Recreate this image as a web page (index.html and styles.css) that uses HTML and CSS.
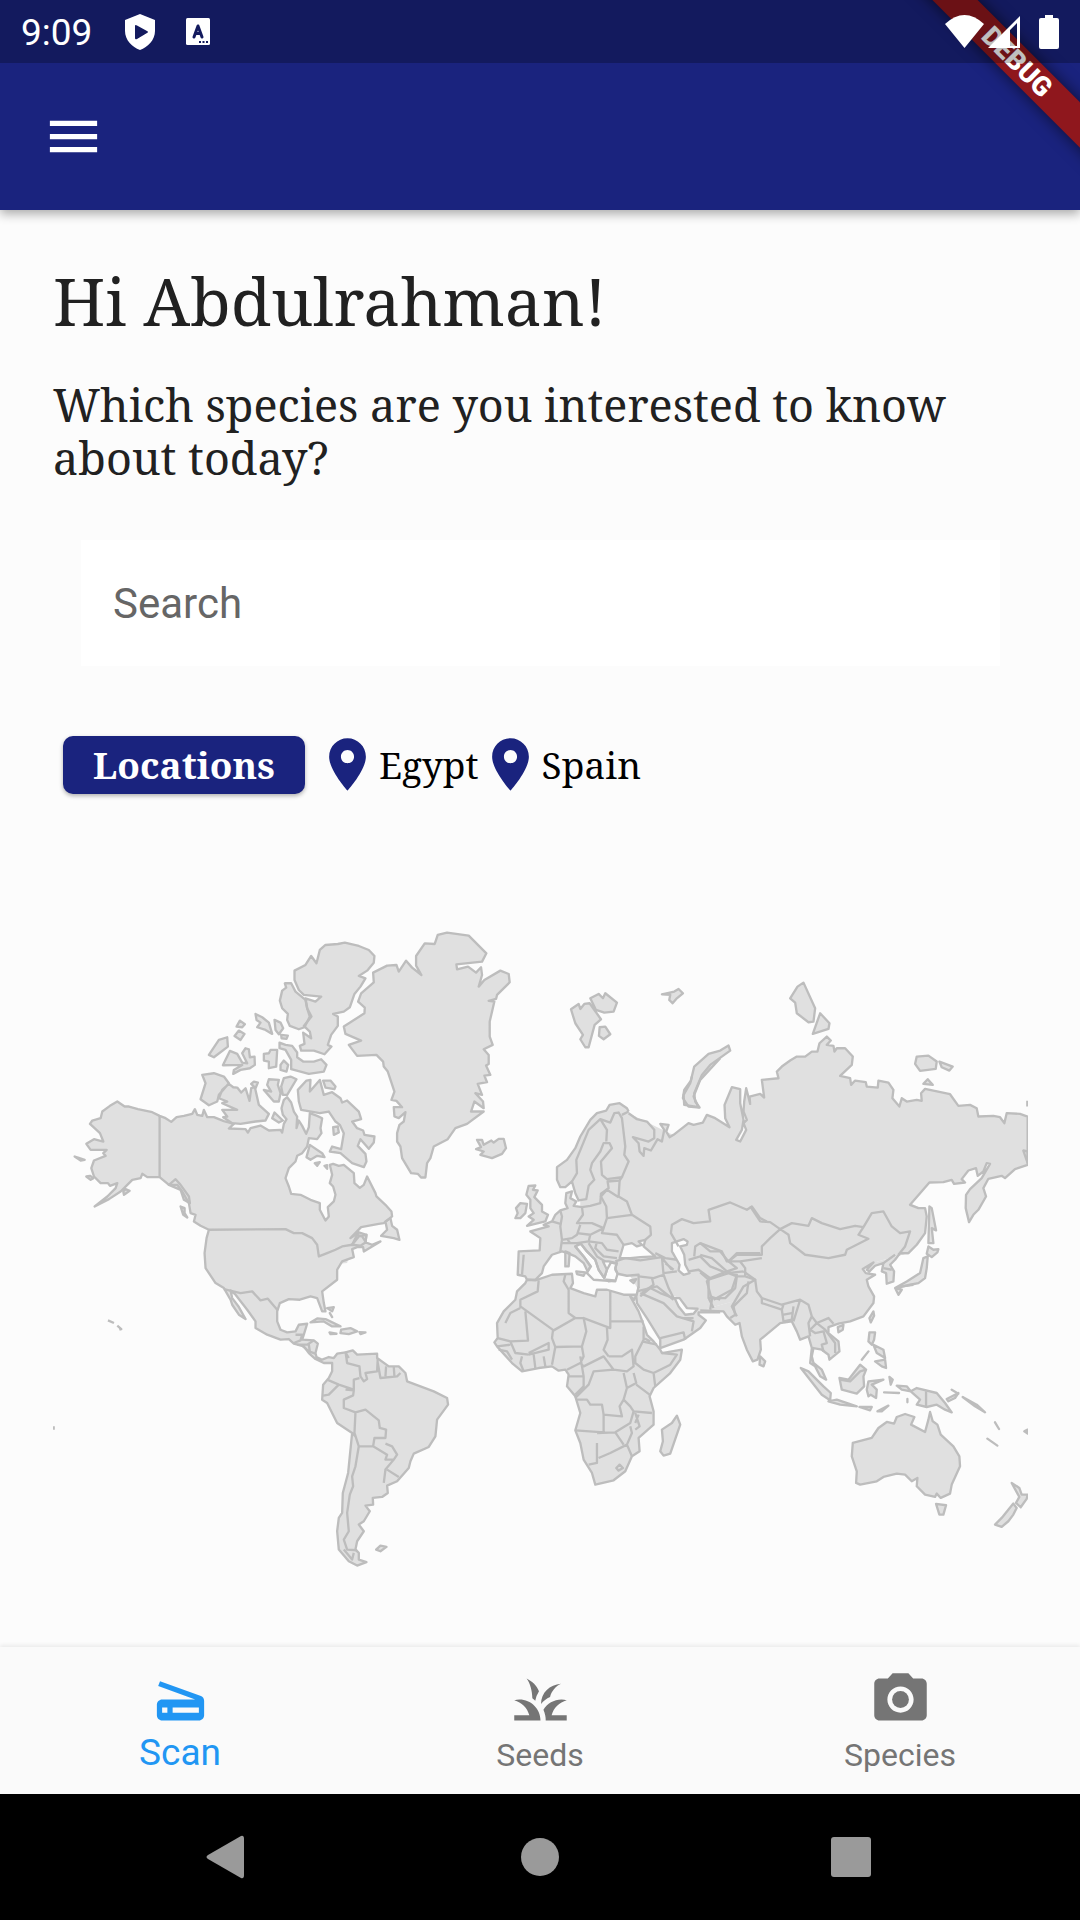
FILE: index.html
```html
<!DOCTYPE html>
<html lang="en">
<head>
<meta charset="utf-8">
<meta name="viewport" content="width=device-width, initial-scale=1">
<title>Species</title>
<link rel="stylesheet" href="styles.css">
</head>
<body>
<div class="screen">
  <header class="top">
    <div class="banner"><span class="banner-ribbon">DEBUG</span></div>
    <div class="status">
      <span class="clock">9:09</span>
      <svg class="status-shield" viewBox="0 0 30 36"><path fill="#fff" fill-rule="evenodd" d="M15 0L30 6V17C30 26 23 33 15 36C7 33 0 26 0 17V6ZM10 12V24Q10 26 12 25L22 19Q24 18 22 17L12 11.500Q10 10.500 10 12Z"/></svg>
      <svg class="status-box" viewBox="0 0 24 27"><rect width="24" height="27" rx="1.500" fill="#fff"/><path d="M8 19L12 8L16 19M9.500 15.500H14.500" fill="none" stroke="#131a5e" stroke-width="3" stroke-linecap="round" stroke-linejoin="round"/><path d="M13 24H22" stroke="#131a5e" stroke-width="2" stroke-dasharray="2 1.500"/></svg>
      <span class="spacer"></span>
      <svg class="status-wifi" viewBox="0 0 39 33"><path fill="#fff" d="M0 9Q19.500 -9 39 9L19.500 33Z"/></svg>
      <svg class="status-signal" viewBox="0 0 32 32"><path fill="#fff" fill-rule="evenodd" d="M0 32L32 0V32ZM22 14V30H29V7Z"/></svg>
      <svg class="status-battery" viewBox="0 0 20 34"><path fill="#fff" d="M6 0H14V3H18Q20 3 20 5V32Q20 34 18 34H2Q0 34 0 32V5Q0 3 2 3H6Z"/></svg>
    </div>
    <div class="appbar">
      <button class="menu" type="button" aria-label="Open menu"><svg class="icon" viewBox="0 0 24 24"><path d="M3 18h18v-2H3v2zm0-5h18v-2H3v2zm0-7v2h18V6H3z"/></svg></button>
    </div>
  </header>

  <main class="content">
    <h1 class="greeting">Hi Abdulrahman!</h1>
    <p class="question">Which species are you interested to know about today?</p>
    <input class="search" type="search" placeholder="Search" aria-label="Search">
    <div class="locations">
      <button class="locations-button" type="button">Locations</button>
      <span class="place"><svg class="icon" viewBox="0 0 24 24"><path d="M12 2C8.130 2 5 5.130 5 9c0 5.250 7 13 7 13s7-7.750 7-13c0-3.870-3.130-7-7-7zm0 9.500c-1.380 0-2.500-1.120-2.500-2.500s1.120-2.500 2.500-2.500 2.500 1.120 2.500 2.500-1.120 2.500-2.500 2.500z"/></svg>Egypt</span>
      <span class="place"><svg class="icon" viewBox="0 0 24 24"><path d="M12 2C8.130 2 5 5.130 5 9c0 5.250 7 13 7 13s7-7.750 7-13c0-3.870-3.130-7-7-7zm0 9.500c-1.380 0-2.500-1.120-2.500-2.500s1.120-2.500 2.500-2.500 2.500 1.120 2.500 2.500-1.120 2.500-2.500 2.500z"/></svg>Spain</span>
    </div>

    <svg class="map" viewBox="157 2760 2927 1950" role="img" aria-label="World map">
      <defs>
        <g id="land">
          <!-- Canada, Alaska and the Arctic islands -->
          <g transform="translate(150 2760)">
            <path d="M200 545L222 560 235 560 262 568 305 577 327 588 345 595 362 606 378 592 400 588 425 582 433 568 440 585 455 588 460 570 470 592 490 592 520 604 550 612 535 626 585 628 592 638 600 625 630 617 655 632 690 630 695 638 700 612 708 598 697 585 693 565 700 540 710 532 722 548 730 575 740 590 738 625 745 602 755 618 767 642 775 622 778 580 800 588 815 595 810 625 813 640 800 658 775 655 770 680 755 700 740 708 735 725 715 745 705 775 715 800 722 822 750 825 780 840 808 850 808 870 825 902 835 890 832 862 850 845 855 825 848 800 838 790 845 765 838 735 848 732 865 738 880 735 910 760 912 790 928 804 940 795 950 770 975 820 978 830 1005 855 1023 875 1025 890 1000 910 985 912 932 922 900 955 925 938 948 945 945 968 930 978 905 975 875 980 855 990 830 1000 805 1010 800 975 785 955 755 940 730 940 705 928 475 930 450 918 430 905 435 885 420 880 415 850 395 815 380 795 355 795 327 772 290 772 275 762 270 775 245 780 230 795 210 815 175 838 132 860 170 830 195 805 200 790 178 798 172 790 150 790 130 770 122 745 130 722 165 708 158 700 168 690 120 690 107 672 130 658 158 665 148 640 118 612 125 602 150 595 155 575 178 558Z"/>
            <path d="M862 72L883 68 925 78 955 90 972 108 970 128 950 152 925 168 945 175 930 200 912 222 898 262 880 275 848 282 862 290 862 318 842 345 832 375 843 380 822 403 790 392 752 392 748 378 762 372 758 338 782 355 778 335 760 318 783 290 770 265 765 235 795 245 812 230 760 225 745 210 732 180 732 152 765 135 782 108 798 130 808 90 825 75Z"/>
            <path d="M703 190L722 190 735 215 765 240 770 265 778 290 762 322 745 328 718 318 710 300 712 282 695 265 688 242 695 212 707 203Z"/>
            <path d="M615 282L635 292 655 308 665 342 645 330 620 322 630 308 618 300ZM672 300L690 308 698 325 685 343 675 330ZM692 345L712 347 708 357 693 355ZM568 302L583 313 575 322 558 320ZM565 332L582 342 570 360 552 348ZM530 352L532 380 490 412 475 405 505 360ZM538 393L560 402 575 428 590 430 575 400 585 385 595 388 598 412 612 410 613 435 598 445 570 450 548 462 550 450 575 435 517 436ZM640 402L655 400 660 390 680 390 677 440 655 445 655 425 640 422ZM700 422L713 435 708 455 690 450 690 435ZM687 368L705 375 725 378 740 398 740 412 758 425 790 425 812 418 828 435 820 455 775 462 722 448 722 420 705 390 687 385ZM455 465L490 460 520 470 535 490 505 525 500 545 475 556 450 538 465 490ZM535 492L548 502 560 503 572 518 585 505 597 543 602 505 613 502 625 555 655 582 645 602 615 605 570 612 545 610 518 592 530 590 515 570 560 570 515 550 530 545 505 535 515 510ZM602 492L610 485 622 488 615 505ZM655 478L685 480 682 495 690 520 685 545 670 545 640 510 662 515 650 495ZM700 475L720 470 738 478 722 505 710 525 697 525 692 500ZM672 578L697 602 685 608 665 595ZM768 482L780 480 778 515 808 480 820 525 845 517 870 535 875 548 890 542 925 575 932 598 905 605 920 625 938 632 942 645 972 650 970 668 955 687 930 658 922 678 945 702 948 725 940 742 905 730 870 700 838 695 845 680 872 688 880 640 868 615 855 605 835 575 808 580 752 570 745 545 742 510ZM818 482L840 482 855 500 852 508 825 503ZM848 622L862 620 865 638 850 645ZM778 675L815 700 822 712 800 708 780 720 768 712ZM793 730L808 727 800 738ZM822 738L830 736 830 747ZM72 710L82 713 102 720 90 722ZM107 770L118 768 128 775 120 780ZM218 815L225 808 237 813 220 825ZM390 860L402 865 402 880 410 893 398 885ZM355 795L375 778 390 795 415 830 418 850 400 840 390 810ZM1005 905L1020 895 1025 918 1040 930 1047 960 1030 955 992 948 1010 930Z"/>
          </g>
          <!-- Greenland, Iceland and Svalbard -->
          <g transform="translate(990 2760)">
            <path d="M350 38L415 47 468 100 455 125 378 133 380 148 413 140 437 158 452 142 455 165 445 200 462 180 510 152 535 162 538 187 500 225 497 237 475 243 492 245 478 305 478 350 487 375 460 388 475 405 475 432 467 437 480 465 462 467 470 487 442 492 455 525 435 520 458 545 460 565 432 545 422 575 460 575 410 612 375 625 352 658 310 680 300 715 290 730 285 773 272 773 262 762 242 760 215 715 210 680 200 665 200 640 207 615 220 605 225 577 205 595 192 590 190 562 215 562 198 543 183 540 192 515 172 455 160 440 158 425 138 405 80 408 55 375 92 362 45 342 40 320 102 280 103 263 83 245 92 220 130 187 128 158 170 137 198 135 205 155 227 122 245 143 273 165 257 137 257 108 283 70 313 72 322 45Z"/>
            <path d="M440 660L455 660 460 675 483 662 490 668 505 657 520 657 527 685 515 702 485 715 450 705 460 695 437 688 452 682ZM722 268L745 252 750 267 762 252 778 250 812 298 793 315 775 382 765 382 750 358 758 345 735 310ZM780 235L805 222 818 235 825 220 860 248 850 275 822 278 797 270ZM808 322L825 320 840 343 820 358 806 348Z"/>
          </g>
          <!-- United States, Central and South America -->
          <g transform="translate(540 3660)">
            <path d="M515 75L535 50 558 45 555 68 575 75 600 65 550 95 548 82 530 82 515 88 520 112 485 125 470 150 470 180 425 215 430 250 435 275 425 275 410 235 390 230 358 240 325 238 298 250 290 275 290 305 300 330 320 338 345 335 355 315 380 312 370 345 365 360 400 362 412 372 405 400 408 412 425 420 445 412 460 415 470 402 495 398 517 392 530 405 590 402 590 415 625 440 655 440 675 460 680 485 720 500 760 515 800 535 803 555 770 600 765 650 745 682 700 702 690 725 685 745 650 785 620 798 622 820 605 832 577 835 578 855 555 858 568 875 550 905 535 915 550 935 530 965 525 990 535 1000 535 1020 558 1028 530 1038 505 1025 475 990 470 935 475 895 485 880 487 820 503 760 515 640 470 610 440 550 425 540 428 495 445 475 455 455 455 430 430 430 405 418 385 400 370 380 340 372 325 358 300 360 260 345 225 325 225 305 200 270 165 225 150 212 155 235 175 262 195 298 175 285 155 255 150 240 130 205 105 190 75 145 72 100 78 55 85 30"/>
            <path d="M390 308L410 296 435 298 480 320 455 320 430 305ZM482 330L510 325 530 335 505 343 480 340ZM447 338L468 342 450 343ZM537 337L555 338 540 343ZM440 265L460 262 455 275ZM448 280L455 292ZM587 990L600 978 618 982 600 995Z"/>
          </g>
          <!-- Europe -->
          <g transform="translate(1440 3240)">
            <path d="M445 95L440 85 418 70 388 75 378 92 350 100 330 120 300 170 285 205 260 240 230 262 230 300 240 322 255 322 275 305 285 340 295 362 318 358 325 318 342 300 330 270 335 250 360 215 370 190 388 190 395 205 362 245 365 285 380 298 425 292 418 302 382 305 385 325 362 342 360 370 330 378 305 382 280 378 288 365 270 355 275 335 258 340 255 370 262 385 240 392 225 405 215 425 190 435 205 440 150 455 180 475 178 512 115 515 112 585 135 590 140 600 165 600 185 580 190 560 215 525 245 515 262 520 285 530 310 550 322 575 332 560 310 530 285 500 300 490 320 515 345 540 355 570 372 595 380 570 368 545 385 545 410 550 405 565 412 582 440 588 475 585 475 625"/>
            <path d="M145 318L165 317 158 330 172 332 162 352 185 375 185 395 203 405 195 425 140 438 160 420 145 410 160 400 150 385 150 360 138 345ZM120 370L140 372 135 400 120 415 105 415 112 400 107 385ZM255 515L268 520 265 560 255 560ZM288 575L315 578 310 588 290 583ZM378 600L402 602 385 605ZM450 602L468 598 460 610Z"/>
            <path d="M635 -10L630 10 610 45 612 75 655 82 640 50 660 0 720 -65"/>
          </g>
          <!-- Africa and Arabia -->
          <g transform="translate(1440 3780)">
            <path d="M140 60L165 62 215 45 275 42 278 70 270 85 310 100 345 110 350 90 380 90 430 105 468 105 462 120 450 110 475 155 490 195 500 225 520 245 540 270 545 280 605 270 600 300 570 340 520 385 508 410 520 455 520 495 475 535 478 575 455 590 435 635 400 662 345 675 335 640 310 600 300 550 285 512 300 460 285 410 260 380 265 345 255 330 235 333 215 320 175 325 125 335 95 310 50 260 42 248 52 235 50 190 70 155 105 120 110 95 135 70ZM590 468L600 495 570 582 550 588 540 575 548 545 545 510 575 490Z"/>
            <path d="M475 80L468 110 470 130 500 175 540 240 540 265 610 240 660 205 677 182 655 165 655 158 720 158"/>
          </g>
          <!-- Northern Asia -->
          <g transform="translate(1980 2880)">
            <path d="M-95 460L-70 478-40 485-18 510-18 535-35 545-82 532-65 550-62 575-50 588-48 565-28 572-15 550-8 538 5 545 12 510 0 492 25 495 18 515 28 532 40 525 85 490 100 495 128 488 140 465 165 475 208 502 195 475 193 435 215 382 240 388 240 430 250 480 245 510 228 540 240 545 258 510 250 490 260 480 250 455 252 425 258 385 270 432 268 410 300 402 312 413 305 360 355 355 350 335 365 320 390 302 410 290 435 290 455 275 472 275 478 250 500 230 512 242 500 255 520 258 523 275 530 265 555 265 578 290 575 315 540 348 570 355 573 375 585 362 617 367 620 380 653 383 655 362 685 368 700 390 697 415 718 440 725 415 740 425 770 420 785 423 783 400 795 387 870 403 895 438 930 435 950 445 955 470 1000 468 1020 472 1033 490 1040 460 1080 462 1103 470V615L1065 628 1035 655 1025 648 985 657 970 685 978 710 955 750 940 765 927 787 917 745 918 705 930 688 965 655 990 612 980 610 970 635 953 648 948 625 925 632 905 658 915 668 882 672 875 660 850 667 808 668 750 735 775 745 795 745 800 770 795 820 770 855 745 880 720 880"/>
            <path d="M430 68L465 145 460 185 445 187 410 160 405 128 390 115 412 80ZM480 160L508 190 505 207 458 222ZM205 257L210 272 150 315 125 345 102 400 105 425 118 443 85 440 68 415 72 390 92 362 102 320 145 282 180 272ZM5 103L42 95 55 87 68 100 48 117 37 130 27 120 30 105ZM770 290L805 287 830 305 827 327 780 333 765 312ZM838 305L878 320 868 332 845 322ZM790 372L803 358 818 375ZM808 740L815 745 828 812 815 805 820 850 805 850ZM1102 423V440M1090 572L1103 575V610Z"/>
          </g>
          <!-- Southern and eastern Asia -->
          <g transform="translate(2100 3570)">
            <path d="M625 190L600 190 585 210 570 225 582 245 580 275 560 282 558 250 545 245 550 220 525 228 508 245 500 240 520 218 488 238 497 250 525 255 500 270 505 290 522 320 520 340 490 380 450 395 415 402 385 412 385 430 415 455 418 485 388 510 385 495 365 480 340 475 335 500 340 520 365 540 378 570 360 560 345 530 330 520 335 475 325 440 300 450 290 425 275 395 240 400 180 450 182 480 172 510 158 515 140 480 125 440 118 400 105 405 80 380 70 365 0 362"/>
            <path d="M180 500L195 515 190 530 178 525ZM413 412L430 405 428 420 415 428ZM520 365L522 378 512 398 508 385ZM685 170L700 180 715 178 712 188 695 202 680 192ZM670 205L683 200 680 235 675 265 655 280 630 285 600 292 585 295 620 275 660 250ZM585 295L605 300 595 315ZM508 428L525 428 522 450 515 465 505 455ZM520 465L550 480 555 505 530 490ZM525 515L555 510 558 535 545 530ZM505 485L485 510ZM302 535L325 545 370 590 392 610 390 632 365 615ZM385 635L410 630 470 650 420 645ZM478 652L515 652 510 662ZM532 665L565 648 545 665ZM418 565L445 570 480 525 498 540 490 560 492 590 470 612 425 600ZM505 575L550 570 515 585 530 600 528 625 512 615 505 620 500 600ZM568 562L578 570 572 585ZM552 608L597 610ZM590 588L620 590 632 605 605 600ZM632 605L650 595 710 610 735 640 755 668 735 660 710 645 680 652 650 645 660 630ZM740 628L775 610 765 625 745 635ZM755 600L775 612ZM788 622L830 645 855 668 825 650ZM622 628V638Z"/>
          </g>
          <!-- Australia and New Zealand -->
          <g transform="translate(2340 4080)">
            <path d="M218 250L275 235 295 205 320 187 342 192 350 172 375 163 403 172 393 195 435 217 445 180 450 157 458 185 472 195 482 225 520 260 538 290 540 320 515 375 510 402 482 415 470 402 465 412 435 405 410 380 412 355 395 365 375 345 350 342 310 352 290 365 240 375 228 370 230 335 215 290ZM468 433L498 437 490 465 478 465ZM695 370L718 385 725 405 743 405 740 418 722 443 708 430 718 412ZM700 432L710 445 700 465 685 485 665 502 645 495 665 475ZM622 237L652 258ZM645 188L657 208ZM733 215L743 210V222Z"/>
          </g>
        </g>
      </defs>

      <use href="#land" class="land-fill"/>
      <g class="land-fill">
        <path transform="translate(540 3660)" d="M85 30L315 30 365 42 395 55 410 75 415 110 465 90 515 75 500 130 300 150Z"/>
        <path transform="translate(1440 3240)" d="M440 98L1260 495 1170 560 660 690 585 650 480 640 420 540 385 545 300 470 300 300 375 190Z"/>
        <path transform="translate(2100 3570)" d="M0 362L625 190 675 60 630 40 670 0H0Z"/>
      </g>
      <g class="sea" transform="translate(1440 3240)">
        <path d="M418 535L430 495 455 490 470 500 485 495 475 485 495 480 490 500 525 530 480 532 450 535Z"/>
        <path d="M575 490L610 478 622 485 620 495 600 500 612 525 615 555 628 580 610 585 595 572 598 555 575 515Z"/>
        <path d="M583 655L598 655 620 685 652 687 640 702 615 705 595 680Z"/>
        <path d="M285 500L302 492 320 515 345 540 355 570 372 595 380 570 392 548 408 552 405 570 412 582 405 605 340 600 320 580 330 560 310 530Z"/>
      </g>
      <use href="#land" class="land-line"/>

      <!-- Borders between countries -->
      <g class="land-line">
        <path transform="translate(150 2760)" d="M327 588V772M905 975L920 945 935 950 948 970"/>
        <path transform="translate(540 3660)" d="M130 208L180 220 215 215 240 242 262 237 292 272M345 345L365 345 360 362 340 370M350 375L380 375 400 362M365 378L385 395 405 402M495 395L500 430 537 440 540 470 550 485 560 478 555 460 590 455 592 415M537 475L520 480 520 510 475 495 440 480M475 495L445 525 428 528M495 510L520 512 518 527 490 540 490 565 525 578 555 570 595 602 598 625 617 630 615 655 582 655 578 680 620 705 615 720 640 720 650 705 635 680 615 672M525 578L522 640 535 680 578 680M535 680L525 740 515 770 518 800 508 825 500 880 505 935 490 960 500 990 530 992M640 720L615 750 610 790M620 750L655 772M592 430L600 475 650 470 660 460M617 440L615 470M640 442L642 470M495 398L505 415M515 640L525 650M385 375L388 395M490 990L515 1020 520 1000"/>
        <path transform="translate(1440 3240)" d="M275 305L290 280 288 240 325 150 360 118 390 128 402 100 415 98 425 115 435 200 432 225 445 245 425 292M378 185L380 150 360 118M425 105L445 95M418 302L415 350 440 365 455 405 380 415 378 380 362 350 380 330 415 352M305 382L308 405 290 430 335 430 370 445 380 415M455 405L510 440 512 465 495 480M370 445L365 460 410 465 430 495M240 392L245 410 240 440 245 480 275 475 290 465 300 435M215 425L240 432M290 460L330 465 370 445M330 465L325 485 365 490 380 510 415 515M245 480L240 515M245 490L290 490 325 485M350 485L345 505 370 530 410 535M325 490L350 530 375 545M130 525L125 585M262 480L270 490M405 545L435 535 480 542 545 532 550 585M525 520L555 535 590 540M545 535L575 570M550 585L520 595 475 590M550 585L565 625 580 655 540 640 510 625 480 650M515 595L520 615 485 640M550 580L590 575M555 550L580 570M625 575L655 570 690 595 680 605 695 660 690 690M595 500L572 460 575 435 605 418 640 430 690 425 685 390 750 368 800 390 815 380 840 415 860 425M642 530L645 500 660 490 690 515 720 515 745 545 770 520 840 520M625 540L660 530 690 560 740 580 790 575M690 595L740 575 770 585 755 630 700 660M790 575L825 600 790 620 755 680 770 710"/>
        <path transform="translate(1440 3780)" d="M175 62L172 95 120 120 120 140 220 212 285 175 265 160 265 90 250 65 255 45M75 190L90 160 120 145M135 155L143 243 90 245 52 235M390 92V185H490M390 185L390 205 310 175 318 215 305 260 225 262 215 235 218 212M310 175L285 175M380 205L382 240 370 270 385 290M305 262L310 290 300 310 310 320 370 290 400 330 440 335 460 320 455 270 425 290 385 290M490 200L490 240 465 290 465 310 490 330 520 340 570 315 590 285 545 280M485 245L530 255M460 340L468 370 440 385 430 340M520 340L525 380M468 375L508 405M440 385L430 420 450 440 460 455 515 460M430 420L418 440 425 470 370 465 365 435 330 435 320 420 290 420M400 330L340 335 325 375 285 415M225 262L215 315M190 290L195 320M160 285L165 325M145 280L205 250 205 270 145 285M125 290L120 310 130 335M90 245L105 280 145 285M50 260L90 255M55 270L80 275 95 300M300 310L260 330M265 350L310 350 310 380 285 405M310 350L300 290M285 512L370 518 370 465M350 520L405 518 450 490 460 455M350 550V610L325 615M355 595L390 580 440 555 455 520 450 500M405 518L430 555M440 555L455 590M465 460L478 500 465 510M475 465L465 490M408 625L418 615 428 625 415 633ZM470 95L530 80 580 120M480 100L550 130 590 170 640 185 635 215M540 235L610 218 615 240M610 175L640 175M490 235L510 245M690 110L720 120"/>
        <path transform="translate(2100 3570)" d="M150 50L180 95 210 97 240 118 210 145 185 170 185 195 110 195 85 215M240 118L275 100 325 108 335 85 365 100 420 118 465 108 490 112 475 135 505 147 440 180 435 195 385 205 315 195 270 160 265 135 240 118M490 112L515 70 550 65 575 110 600 130 630 125 615 170 595 195M0 160L65 185 80 215 120 215 185 205M0 195L35 205 75 240 85 250 25 270 0 248M85 215L110 235 80 245M25 270L25 325 75 325 105 295 110 260 85 250M120 215L135 235 135 260 110 260M135 260L165 270 170 305 185 325 245 345 300 330 325 345 335 380 350 400 385 385 400 402M145 275L140 310 100 350 105 375 90 385M25 325L40 355M185 325L185 340 245 360 250 345M245 360L250 395 275 390 280 350M300 330L280 395M335 380L325 400 330 440M350 400L330 420 345 430 370 425 380 460 365 465 370 485M350 400L375 420 405 460 405 490M550 235L575 240M585 195L550 220M250 375L275 370M678 605V650M418 570L450 575 480 545 498 540M605 290L640 285"/>
        <path d="M322 3962L340 3970M350 3978L362 3988 356 3990M159 4280V4290"/>
      </g>
    </svg>
  </main>

  <nav class="tabs" aria-label="Sections">
    <a class="tab tab-active" href="#scan"><svg class="icon" viewBox="0 0 24 24"><path d="M19.800 10.700L4.200 5l-.7 1.900L17.600 12H5c-1.100 0-2 .9-2 2v4c0 1.100.9 2 2 2h14c1.100 0 2-.9 2-2v-5.500c0-.8-.5-1.600-1.200-1.800zM7 17H5v-2h2v2zm12 0H9v-2h10v2z"/></svg><span>Scan</span></a>
    <a class="tab" href="#seeds"><svg class="icon" viewBox="0 0 24 24"><path d="M12 20H2v-2h5.750C7.020 15.190 4.810 12.990 2 12.260 2.640 12.100 3.310 12 4 12c4.420 0 8 3.580 8 8zM22 12.260c-.64-.16-1.310-.26-2-.26-2.930 0-5.480 1.580-6.880 3.930.29.660.53 1.350.67 2.070.13.650.2 1.320.2 2h8v-2h-5.750c.74-2.810 2.950-5.010 5.760-5.740zM15.640 11.020C16.200 8.800 17.700 7 19.800 6C15.500 6.300 12.200 9.400 12.200 13.700C13.100 12.500 14.300 11.600 15.640 11.020zM11.420 8.850C10.600 6.700 8.900 5.100 6.700 4C8.200 6 8.800 8.800 8.900 11.500Q9.500 11.900 10 12.500Q10.300 10.600 11.420 8.850z"/></svg><span>Seeds</span></a>
    <a class="tab" href="#species"><svg class="icon" viewBox="0 0 24 24"><circle cx="12" cy="12" r="3.200"/><path d="M9 2L7.170 4H4c-1.100 0-2 .9-2 2v12c0 1.100.9 2 2 2h16c1.100 0 2-.9 2-2V6c0-1.100-.9-2-2-2h-3.170L15 2H9zm3 15c-2.760 0-5-2.240-5-5s2.240-5 5-5 5 2.240 5 5-2.240 5-5 5z"/></svg><span>Species</span></a>
  </nav>

  <div class="system">
    <button class="system-button" type="button" aria-label="Back"><svg class="system-icon" viewBox="0 0 42 42"><path d="M35 0Q38 -1 38 3V39Q38 43 35 42L2 23Q-1 21 2 19Z"/></svg></button>
    <button class="system-button" type="button" aria-label="Home"><svg class="system-icon" viewBox="0 0 42 42"><circle cx="21" cy="21" r="19"/></svg></button>
    <button class="system-button" type="button" aria-label="Recent apps"><svg class="system-icon" viewBox="0 0 42 42"><rect x="-1" y="1" width="40" height="40" rx="3"/></svg></button>
  </div>
</div>
</body>
</html>
```

FILE: styles.css
```css
* { box-sizing: border-box; }

body {
  margin: 0;
  background: #fcfcfc;
  color: #212121;
  font-family: Roboto, "Liberation Sans", sans-serif;
}

button {
  border: 0;
  padding: 0;
  background: none;
  font: inherit;
  cursor: pointer;
}

svg { display: block; flex: none; }

.screen {
  display: flex;
  flex-direction: column;
  min-height: 100vh;
}

.icon {
  width: 63px;
  height: 63px;
  fill: currentColor;
}

.top {
  position: relative;
  background: #1a237e;
  color: #fff;
  box-shadow: 0 4px 10px rgba(0, 0, 0, .32);
}

.status {
  position: relative;
  display: flex;
  align-items: center;
  height: 63px;
  padding: 0 21px;
  background: rgba(0, 0, 0, .25);
}

.clock {
  padding-top: 2px;
  font-size: 37px;
  line-height: 44px;
}

.spacer { flex: 1; }
.status-shield { width: 30px; height: 36px; margin-left: 33px; }
.status-box { width: 24px; height: 27px; margin-left: 31px; }
.status-wifi { width: 39px; height: 33px; }
.status-signal { width: 32px; height: 32px; margin-left: 4px; }
.status-battery { width: 20px; height: 34px; margin-left: 19px; }

.appbar {
  display: flex;
  align-items: center;
  height: 147px;
  padding: 0 42px;
}

.menu { color: #fff; }

.banner {
  position: absolute;
  top: 0;
  right: 0;
  width: 200px;
  height: 200px;
  overflow: hidden;
}

.banner-ribbon {
  position: absolute;
  top: 46px;
  right: -87px;
  width: 300px;
  background: #8f171d;
  box-shadow: 0 0 16px rgba(0, 0, 0, .6);
  font-size: 27px;
  font-weight: 900;
  line-height: 32px;
  text-align: center;
  transform: rotate(45deg);
}

.content {
  flex: 1;
  display: flex;
  flex-direction: column;
  padding: 42px 52px 0 53px;
  font-family: "Noto Serif", "Liberation Serif", serif;
}

.greeting {
  margin: 0;
  font-size: 66px;
  font-weight: 400;
  line-height: 96px;
}

.question {
  margin: 30px 0 0;
  font-size: 45px;
  line-height: 53px;
}

.search {
  height: 126px;
  margin: 56px 28px 0;
  padding: 0 32px;
  border: 0;
  background: #fff;
  color: #212121;
  font-family: Roboto, "Liberation Sans", sans-serif;
  font-size: 42px;
}

.search::placeholder { color: #666; opacity: 1; }

.locations {
  display: flex;
  align-items: center;
  margin: 67px 10px 0;
}

.locations-button {
  width: 242px;
  height: 58px;
  margin-right: 11px;
  border-radius: 10px;
  background: #1a237e;
  box-shadow: 0 2px 4px rgba(0, 0, 0, .3);
  color: #fff;
  font-size: 37px;
  font-weight: 700;
  line-height: 58px;
}

.place {
  display: flex;
  align-items: center;
  color: #000;
  font-size: 37px;
}

.place .icon { color: #1a237e; }

.map {
  width: 100%;
  height: auto;
  margin-top: 124px;
}

.land-fill { fill: #e0e0e0; }

.land-line,
.sea {
  fill: none;
  stroke: #bdbdbd;
  stroke-width: 7;
  stroke-linejoin: round;
}

.sea { fill: #fcfcfc; }

.tabs {
  display: grid;
  grid-template-columns: repeat(3, 1fr);
  height: 147px;
  background: #fafafa;
  box-shadow: 0 -2px 4px rgba(0, 0, 0, .07);
}

.tab {
  display: flex;
  flex-direction: column;
  align-items: center;
  padding-top: 21px;
  color: #757575;
  font-size: 32px;
  line-height: 48px;
  text-decoration: none;
}

.tab-active {
  color: #2196f3;
  font-size: 37px;
  line-height: 44px;
}

.system {
  display: grid;
  grid-template-columns: repeat(3, 1fr);
  height: 126px;
  padding: 0 70px;
  background: #000;
}

.system-button {
  display: flex;
  align-items: center;
  justify-content: center;
}

.system-icon {
  width: 42px;
  height: 42px;
  overflow: visible;
  fill: #9a9a9a;
}
```
